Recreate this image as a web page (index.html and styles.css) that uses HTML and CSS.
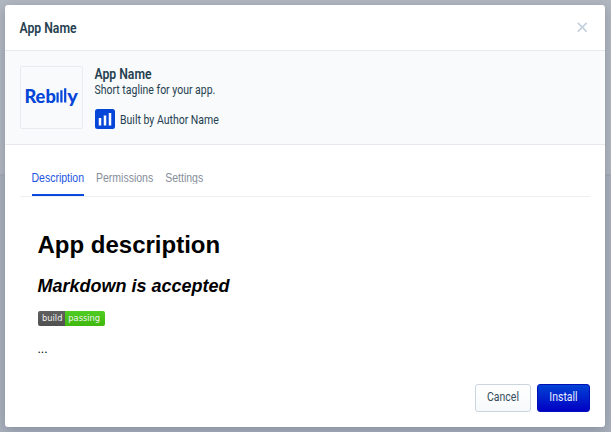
FILE: index.html
```html
<!DOCTYPE html>
<html lang="en">
<head>
<meta charset="utf-8">
<title>App Name</title>
<link rel="stylesheet" href="styles.css">
</head>
<body>
<section class="modal">
  <header class="modal-header">
    <h1 class="modal-title tall">App Name</h1>
    <svg class="close" viewBox="0 0 12 12"><path d="M1.8 1.8l8.4 8.4M10.2 1.8l-8.4 8.4"/></svg>
  </header>
  <div class="summary">
    <div class="logo">
      <svg viewBox="0 0 62 61">
        <text x="3.4" y="35.6" textLength="31.4" lengthAdjust="spacingAndGlyphs">Reb</text>
        <path d="M36.6 25.5v10.1M40.4 23.2v12.4M44.2 21.2v14.4"/>
        <text x="46.2" y="35.6" textLength="10.6" lengthAdjust="spacingAndGlyphs">y</text>
      </svg>
    </div>
    <div class="info">
      <h2 class="app-name tall">App Name</h2>
      <p class="tagline tall">Short tagline for your app.</p>
      <div class="author">
        <svg class="author-icon" viewBox="0 0 20 20"><rect width="20" height="20" rx="2.5"/><path d="M5 9v7.5M10 6.5v10M15 4v12.5"/></svg>
        <span class="tall">Built by Author Name</span>
      </div>
    </div>
  </div>
  <nav class="tabs">
    <div class="tab active"><span class="tall">Description</span></div>
    <div class="tab"><span class="tall">Permissions</span></div>
    <div class="tab"><span class="tall">Settings</span></div>
  </nav>
  <article class="description">
    <h1>App description</h1>
    <h2>Markdown is accepted</h2>
    <div class="badge"><span class="badge-label">build</span><span class="badge-status">passing</span></div>
    <p>...</p>
  </article>
  <footer class="actions">
    <button class="btn cancel"><span class="tall">Cancel</span></button>
    <button class="btn install"><span class="tall">Install</span></button>
  </footer>
</section>
</body>
</html>
```
FILE: styles.css
```css
* { box-sizing: border-box; }
body {
  margin: 0;
  height: 432px;
  padding: 5px 6px 5px 4.5px;
  overflow: hidden;
  background: linear-gradient(#b1b7bf 0 174px, #a5abb6 174px 176px, #a9b0bb 176px);
  font-family: Roboto, sans-serif;
  color: #254050;
}
h1, h2, p { margin: 0; }
.tall { display: block; transform: scaleY(1.15); }
.modal {
  display: flex;
  flex-direction: column;
  width: 600.5px;
  height: 421.5px;
  background: #fff;
  border-radius: 3px;
  box-shadow: 0 3px 12px rgba(60, 65, 95, .3);
}
.modal-header {
  display: flex;
  align-items: center;
  justify-content: space-between;
  height: 46px;
  padding: 0 16.5px 0 15px;
  border-bottom: 1px solid #e6eaee;
}
.modal-title, .app-name { font-size: 12.2px; line-height: 16px; font-weight: 600; }
.modal-title { margin-top: 1px; }
.close { width: 12.5px; height: 12.5px; fill: none; stroke: #c4d0dc; stroke-width: 1.6; }
.summary {
  display: flex;
  height: 94px;
  padding: 15px;
  gap: 11.5px;
  background: #f8fafc;
  border-bottom: 1px solid #e6eaee;
}
.logo { width: 63.5px; height: 63px; border: 1px solid #e8ebef; border-radius: 2px; }
.logo svg { display: block; width: 62px; height: 61px; }
.logo text { font: 900 18.5px Lato, sans-serif; fill: #0546d8; }
.logo path { stroke: #0546d8; stroke-width: 2.2; }
.tagline { margin-top: .5px; font-size: 10.5px; line-height: 16px; }
.author { display: flex; align-items: center; gap: 5.5px; margin-top: 10.5px; font-size: 10.5px; }
.author-icon { width: 20px; height: 20px; fill: #0546d8; }
.author-icon path { stroke: #fff; stroke-width: 2.5; }
.tabs {
  display: flex;
  gap: 12px;
  height: 52px;
  margin: 0 15px;
  padding: 0 12px;
  border-bottom: 1px solid #edf0f3;
  font: 10.5px/16px "Liberation Sans", sans-serif;
  color: #868e9b;
}
.tab { height: 51px; padding-top: 24px; }
.active { color: #1d55df; border-bottom: 2px solid #0a49dc; }
.description { height: 177px; padding: 33px; color: #000; font-family: "Liberation Sans", sans-serif; }
.description h1 { font-size: 24px; line-height: 30px; }
.description h2 { margin-top: 14px; font-size: 18px; line-height: 24px; font-style: italic; }
.badge {
  display: flex;
  width: 67.5px;
  height: 15px;
  margin-top: 13px;
  border-radius: 2px;
  overflow: hidden;
  color: #f2f2f2;
  font: 8.3px/15px "DejaVu Sans", sans-serif;
}
.badge-label { width: 28px; padding-left: 4.5px; background: linear-gradient(#606060, #505050); }
.badge-status { width: 40px; padding-left: 3px; background: linear-gradient(#4fcc22, #40b80d); }
.description p { margin-top: 15px; font-size: 12px; line-height: 16px; }
.actions { display: flex; justify-content: flex-end; gap: 6px; padding: 10px 15px; }
.btn { height: 28px; padding: 0; border-radius: 3px; font: 10.5px/16px Roboto, sans-serif; }
.cancel { width: 56px; border: 1px solid #cbd5df; background: linear-gradient(#fff, #f6f9fb); color: #344c5b; }
.install { width: 53px; border: 1px solid #0010b8; background: linear-gradient(#0043d4, #0000c4); color: #e8edff; }
```
